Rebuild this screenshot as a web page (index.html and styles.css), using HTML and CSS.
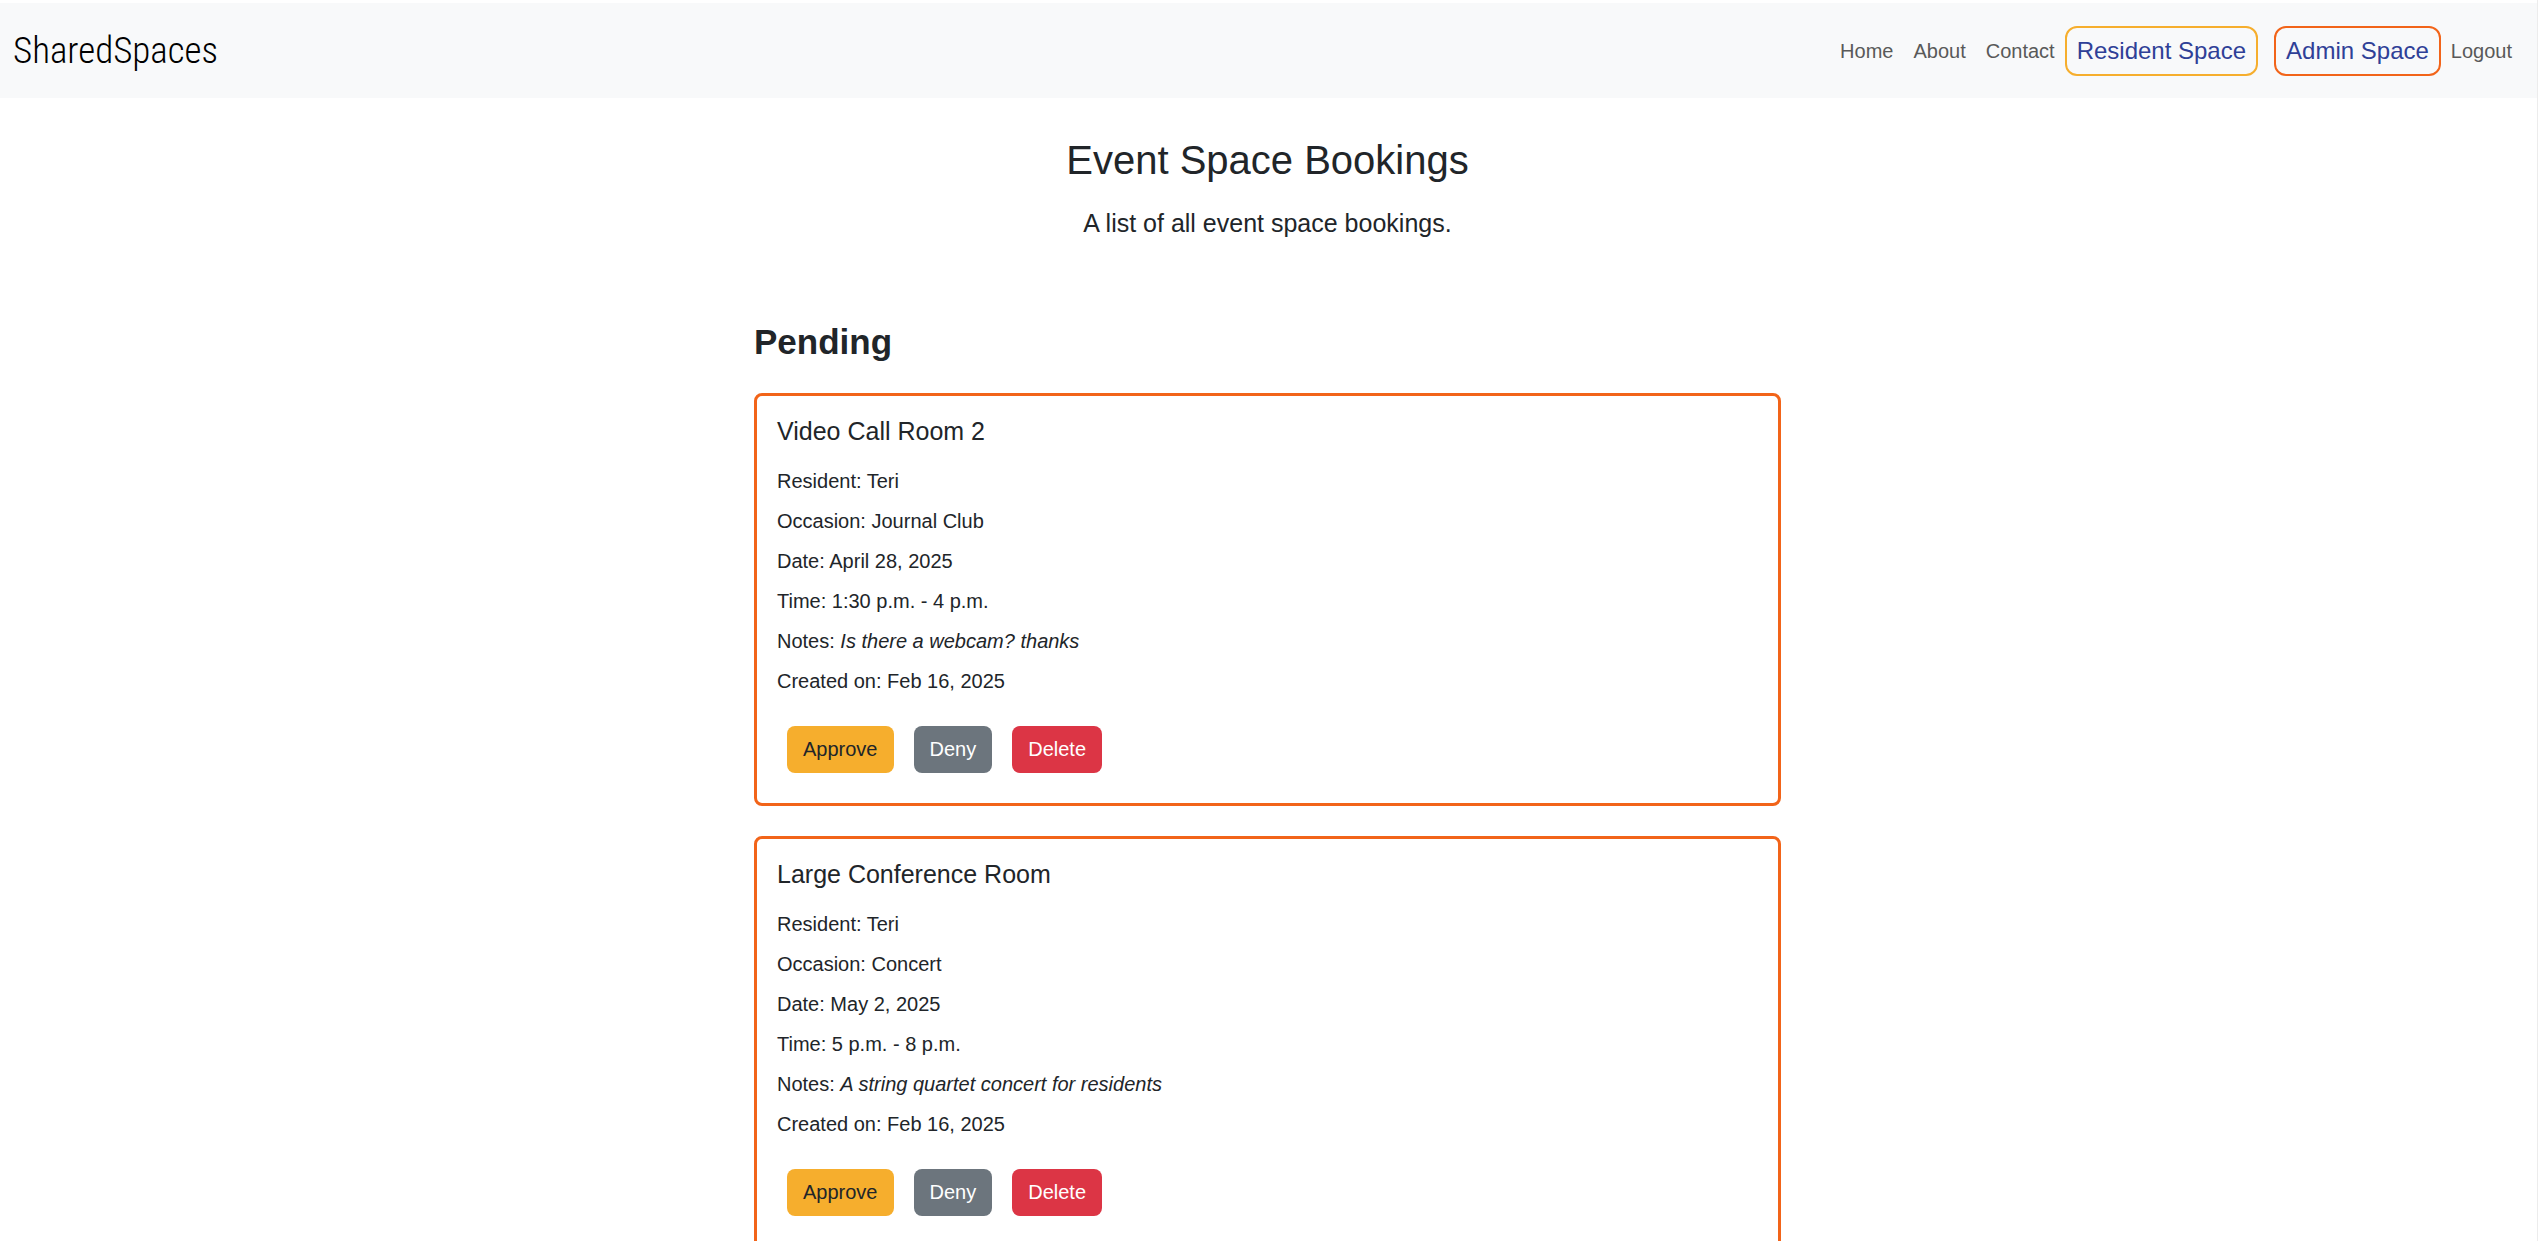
FILE: index.html
```html
<!DOCTYPE html>
<html lang="en">
<head>
<meta charset="utf-8">
<meta name="viewport" content="width=device-width, initial-scale=1">
<title>SharedSpaces</title>
<link rel="stylesheet" href="styles.css">
</head>
<body>
<header class="navbar">
  <a class="brand" href="#">SharedSpaces</a>
  <nav class="nav">
    <a class="nav-link" href="#">Home</a>
    <a class="nav-link" href="#">About</a>
    <a class="nav-link" href="#">Contact</a>
    <a class="space-link resident" href="#">Resident Space</a>
    <a class="space-link admin" href="#">Admin Space</a>
    <a class="nav-link" href="#">Logout</a>
  </nav>
</header>
<main class="content">
  <div class="intro">
    <h1>Event Space Bookings</h1>
    <p>A list of all event space bookings.</p>
  </div>
  <section class="bookings">
    <h2>Pending</h2>
    <article class="card">
      <h3>Video Call Room 2</h3>
      <p>Resident: Teri</p>
      <p>Occasion: Journal Club</p>
      <p>Date: April 28, 2025</p>
      <p>Time: 1:30 p.m. - 4 p.m.</p>
      <p>Notes: <em>Is there a webcam? thanks</em></p>
      <p>Created on: Feb 16, 2025</p>
      <div class="actions">
        <button class="btn approve" type="button">Approve</button>
        <button class="btn deny" type="button">Deny</button>
        <button class="btn delete" type="button">Delete</button>
      </div>
    </article>
    <article class="card">
      <h3>Large Conference Room</h3>
      <p>Resident: Teri</p>
      <p>Occasion: Concert</p>
      <p>Date: May 2, 2025</p>
      <p>Time: 5 p.m. - 8 p.m.</p>
      <p>Notes: <em>A string quartet concert for residents</em></p>
      <p>Created on: Feb 16, 2025</p>
      <div class="actions">
        <button class="btn approve" type="button">Approve</button>
        <button class="btn deny" type="button">Deny</button>
        <button class="btn delete" type="button">Delete</button>
      </div>
    </article>
  </section>
</main>
</body>
</html>
```
FILE: styles.css
```css
* {
  box-sizing: border-box;
}

html {
  scrollbar-width: none;
}

body {
  margin: 0;
  padding-top: 3px;
  border-right: 1px solid #ececec;
  background: #fff;
  color: #212529;
  font: 20px/30px "Liberation Sans", Arial, sans-serif;
}

h1, h2, h3, p {
  margin: 0;
}

.navbar {
  display: flex;
  align-items: center;
  justify-content: space-between;
  min-height: 95px;
  padding: 0 15px 0 13px;
  background: #f8f9fa;
}

.brand {
  color: #000;
  font: 300 37px/48px "Roboto Condensed", "Liberation Sans Narrow", Roboto, sans-serif;
  text-decoration: none;
}

.nav {
  display: flex;
  align-items: center;
}

.nav-link {
  padding: 10px;
  color: #595959;
  text-decoration: none;
}

.space-link {
  padding: 8px 10px;
  border: 2px solid #f6ae2d;
  border-radius: 12px;
  color: #2f4097;
  font-size: 24px;
  text-decoration: none;
}

.space-link.admin {
  margin-left: 16px;
  border-color: #f26419;
}

.content {
  width: 100%;
  max-width: 1029px;
  margin: 0 auto;
  padding: 38px 2px 0 0;
}

.intro {
  text-align: center;
}

.intro h1 {
  font-size: 40px;
  font-weight: 400;
  line-height: 48px;
}

.intro p {
  margin-top: 24px;
  font-size: 25px;
}

.bookings h2 {
  margin-top: 83px;
  margin-bottom: 30px;
  font-size: 35px;
  line-height: 42px;
}

.card {
  margin-bottom: 30px;
  padding: 20px;
  border: 3px solid #f26419;
  border-radius: 8px;
}

.card h3 {
  margin-bottom: 20px;
  font-size: 25px;
  font-weight: 400;
}

.card p {
  margin-bottom: 10px;
}

.actions {
  display: flex;
  gap: 20px;
  padding: 20px 10px 10px;
}

.btn {
  padding: 8px 16px;
  border: 0;
  border-radius: 8px;
  color: #fff;
  font: inherit;
  line-height: 31px;
}

.approve {
  background: #f6ae2d;
  color: #212529;
}

.deny {
  background: #6c757d;
}

.delete {
  background: #dc3545;
}
```
